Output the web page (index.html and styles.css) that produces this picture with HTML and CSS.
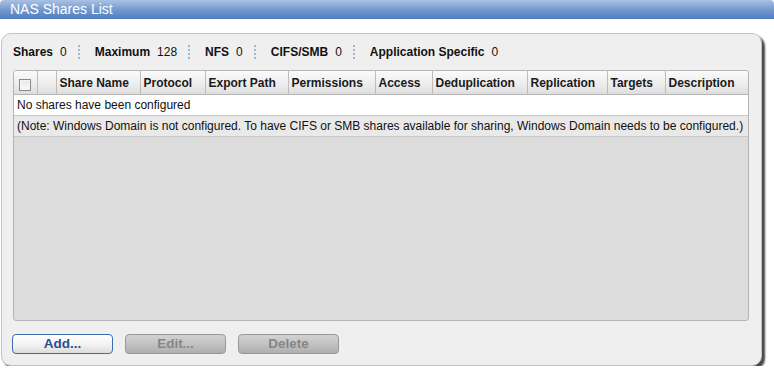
FILE: index.html
```html
<!DOCTYPE html>
<html>
<head>
<meta charset="utf-8">
<link rel="stylesheet" href="styles.css">
</head>
<body>
<div class="titlebar">NAS Shares List</div>
<div class="panel">
  <div class="stats">
    <span class="lbl">Shares</span><span class="val">0</span><span class="sep"></span>
    <span class="lbl">Maximum</span><span class="val">128</span><span class="sep"></span>
    <span class="lbl">NFS</span><span class="val">0</span><span class="sep"></span>
    <span class="lbl">CIFS/SMB</span><span class="val">0</span><span class="sep"></span>
    <span class="lbl">Application Specific</span><span class="val">0</span>
  </div>
  <div class="grid">
    <table>
      <colgroup>
        <col class="c1"><col class="c2"><col class="c3"><col class="c4"><col class="c5"><col class="c6"><col class="c7"><col class="c8"><col class="c9"><col class="c10"><col class="c11">
      </colgroup>
      <thead>
        <tr>
          <th><span class="chk"></span></th>
          <th></th>
          <th>Share Name</th>
          <th>Protocol</th>
          <th>Export Path</th>
          <th>Permissions</th>
          <th>Access</th>
          <th>Deduplication</th>
          <th>Replication</th>
          <th>Targets</th>
          <th>Description</th>
        </tr>
      </thead>
      <tbody>
        <tr class="r1"><td colspan="11">No shares have been configured</td></tr>
        <tr class="r2"><td colspan="11">(Note: Windows Domain is not configured. To have CIFS or SMB shares available for sharing, Windows Domain needs to be configured.)</td></tr>
      </tbody>
    </table>
  </div>
  <div class="buttons">
    <button class="btn primary">Add...</button>
    <button class="btn disabled">Edit...</button>
    <button class="btn disabled">Delete</button>
  </div>
</div>
</body>
</html>
```

FILE: styles.css
```css
html, body {
  margin: 0;
  padding: 0;
  background: #ffffff;
  font-family: "Liberation Sans", Arial, sans-serif;
  font-size: 12px;
  color: #111;
}

.titlebar {
  height: 19px;
  line-height: 19px;
  padding-left: 10px;
  color: #ffffff;
  font-size: 14px;
  background: linear-gradient(to bottom, #a9c2e4 0%, #7a9ed2 45%, #4f7cbc 100%);
  border-radius: 4px 4px 0 0;
}

.panel {
  box-sizing: border-box;
  margin: 14px 0 0 1px;
  width: 761px;
  height: 333px;
  background: #efefef;
  border: 1px solid #c2c2c2;
  border-radius: 10px;
  box-shadow: 3px 3px 2px #4a4a4a;
  padding: 0 12px 0 11px;
}

.stats {
  height: 36px;
  display: flex;
  align-items: center;
}

.lbl {
  font-weight: bold;
  color: #111;
}

.val {
  margin-left: 7px;
  color: #111;
}

.sep {
  width: 0;
  height: 14px;
  border-left: 2px dotted #9fb4cf;
  margin: 0 15px 0 11px;
}

.grid {
  box-sizing: border-box;
  height: 251px;
  width: 736px;
  background: #dcdcdc;
  border: 1px solid #b4b4b4;
  border-radius: 3px;
  overflow: hidden;
}

table {
  border-collapse: collapse;
  table-layout: fixed;
  width: 734px;
}

col.c1 { width: 23px; }
col.c2 { width: 19px; }
col.c3 { width: 84px; }
col.c4 { width: 65px; }
col.c5 { width: 83px; }
col.c6 { width: 87px; }
col.c7 { width: 57px; }
col.c8 { width: 95px; }
col.c9 { width: 80px; }
col.c10 { width: 58px; }
col.c11 { width: 83px; }

th {
  height: 23px;
  padding: 0 0 0 3px;
  text-align: left;
  font-weight: bold;
  font-size: 12px;
  color: #1a1a1a;
  background: linear-gradient(to bottom, #fafafa 0%, #ededed 55%, #dedede 100%);
  border-right: 1px solid #bdbdbd;
  border-bottom: 1px solid #b4b4b4;
  white-space: nowrap;
  overflow: hidden;
}

th:last-child {
  border-right: none;
}

th:first-child {
  padding: 0;
  text-align: center;
}

.chk {
  display: inline-block;
  box-sizing: border-box;
  width: 12px;
  height: 12px;
  margin-top: 5px;
  vertical-align: top;
  border: 1px solid #8a8a8a;
  background: linear-gradient(to bottom, #e6e6e6, #fbfbfb);
  box-shadow: inset 0 0 0 1px #f4f4f4;
}

td {
  height: 20px;
  padding: 0 0 0 3px;
  font-size: 12px;
  color: #111;
  border-bottom: 1px solid #c8c8c8;
  white-space: nowrap;
  overflow: hidden;
}

tr.r1 td { background: #ffffff; }
tr.r2 td { background: #e9e9e9; }

.buttons {
  display: flex;
  gap: 12px;
  margin: 13px 0 0 -1px;
}

.btn {
  box-sizing: border-box;
  width: 101px;
  height: 20px;
  padding: 0;
  border-radius: 4px;
  font-family: "Liberation Sans", Arial, sans-serif;
  font-size: 13.5px;
  font-weight: bold;
  line-height: 18px;
}

.btn.primary {
  color: #24518f;
  border: 1px solid #3c6db3;
  background: linear-gradient(to bottom, #ffffff 0%, #f4f4f4 50%, #dcdcdc 100%);
}

.btn.disabled {
  color: #868686;
  border: 1px solid #979797;
  background: linear-gradient(to bottom, #d2d2d2 0%, #c2c2c2 50%, #afafaf 100%);
}
```
